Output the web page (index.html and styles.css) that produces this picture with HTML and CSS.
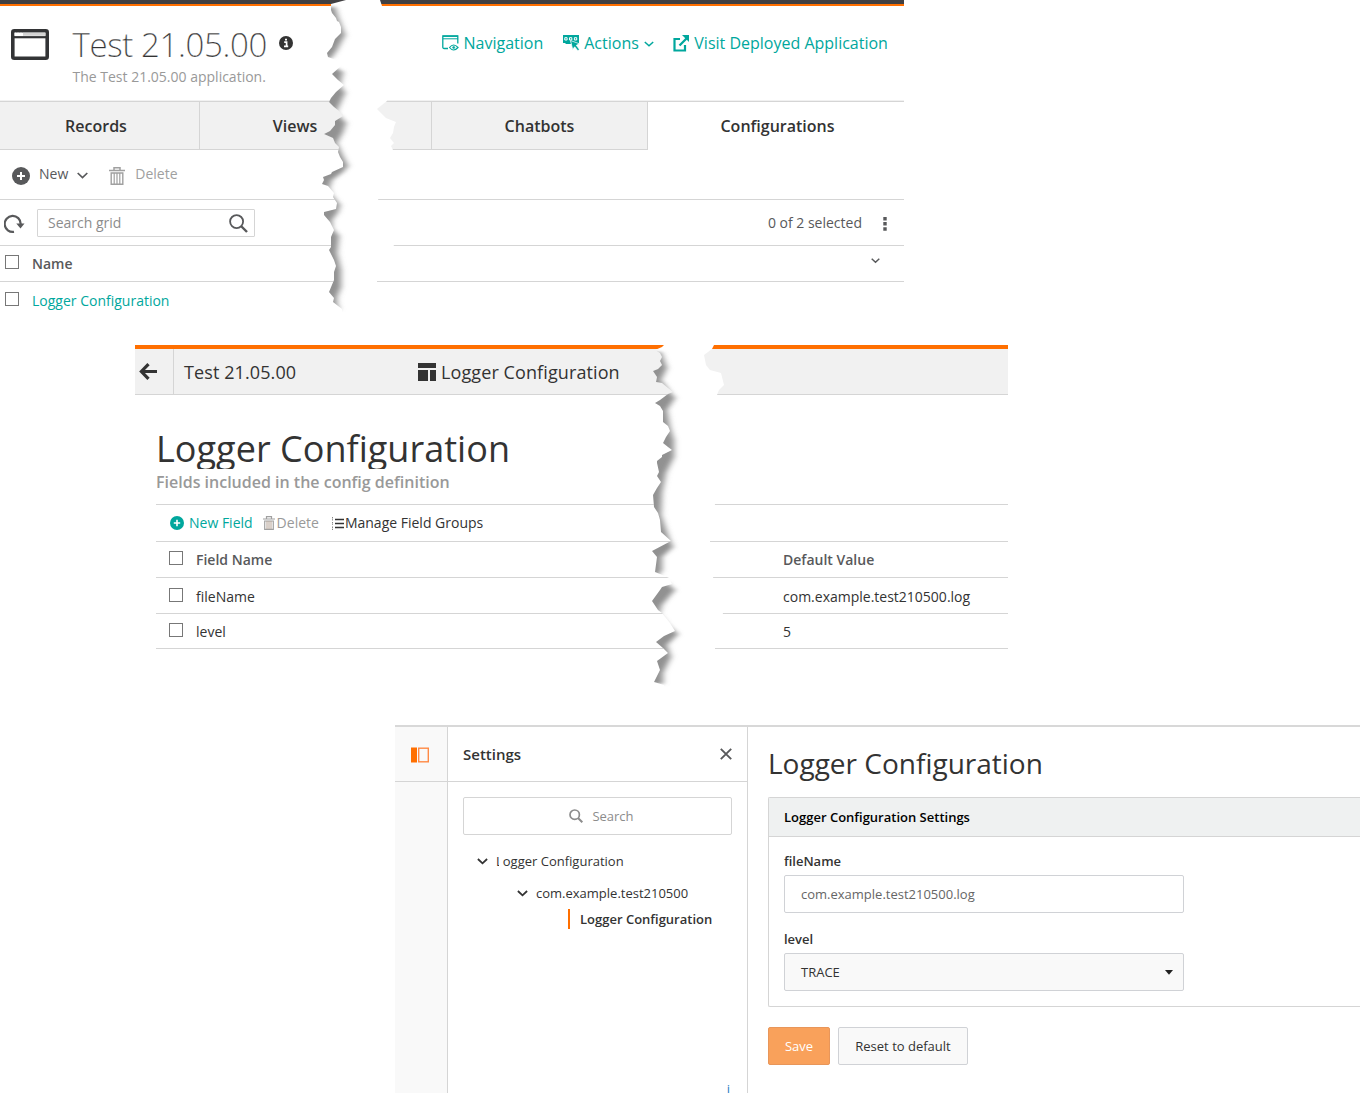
FILE: index.html
```html
<!DOCTYPE html>
<html lang="en">
<head>
<meta charset="utf-8">
<title>Logger Configuration</title>
<link rel="stylesheet" href="styles.css">
</head>
<body>
<section class="app">
  <div class="app-strip"></div>
  <header class="app-head">
    <svg class="app-icon" width="38" height="31" viewBox="0 0 38 31"><rect x="1.800" y="1.800" width="34.400" height="27.400" rx="1.500" fill="none" stroke="#333436" stroke-width="3.600"/><path d="M3 8.200h32" stroke="#333436" stroke-width="2.200"/><path d="M12 5.300h22.500" stroke="#d4d4d4" stroke-width="3"/><path d="M3.500 5.300h1.500M6.300 5.300h1.500M9.200 5.300h1.500" stroke="#fff" stroke-width="3"/></svg>
    <div class="app-title">
      <h1><span>Test 21.05.00</span><svg width="14" height="14" viewBox="0 0 14 14"><circle cx="7" cy="7" r="7" fill="#333"/><path d="M5.200 6.200h2.400v4M5 10.300h4.200M6 3.600h2" stroke="#fff" stroke-width="1.700" fill="none"/></svg></h1>
      <p>The Test 21.05.00 application.</p>
    </div>
    <nav class="app-links">
      <a class="l-nav"><svg width="17" height="16" viewBox="0 0 17 16" fill="none" stroke="#00a79d"><path d="M6 13.500H2.200Q.8 13.500.8 12V1h15v7.500" stroke-width="1.300"/><path d="M1 1.200h15" stroke-width="1.300"/><path d="M1 3.800h15" stroke-width="1"/><path d="M7.500 12.500q4-5 8.500 0q-4.500 5-8.500 0z" stroke-width="1.200"/><circle cx="11.700" cy="12.500" r="1.100" fill="#00a79d" stroke-width=".6"/></svg><span>Navigation</span></a>
      <a class="l-act"><svg width="17" height="16" viewBox="0 0 17 16"><path d="M0 0h16v8h-3L7.500 6l.8 3H3l-1-1H0z" fill="#00a79d"/><path d="M1.800 2.700h2.300v2.300H1.800zM6.500 2.700h2.300v2.300H6.500zM11.400 2.700h2.300v2.300h-2.300z" fill="none" stroke="#fff" stroke-width="1"/><path d="M7.500 5.500l9 3.300-3.200 1.500 3 4-1.400 1.500-3.200-4-2 2.600z" fill="#00a79d" stroke="#fff" stroke-width=".7"/></svg><span>Actions</span><svg class="chev" width="10" height="6" viewBox="0 0 10 6"><path d="M.8 1l4.200 3.800L9.200 1" fill="none" stroke="#00a79d" stroke-width="1.500"/></svg></a>
      <a class="l-vis"><svg width="17" height="17" viewBox="0 0 17 17" fill="none" stroke="#00a79d"><path d="M7 4H1.500v11.500H12V10" stroke-width="2.200"/><path d="M6.500 10.500L14 3" stroke-width="2.300"/><path d="M9 0H16v7z" fill="#00a79d" stroke="none"/></svg><span>Visit Deployed Application</span></a>
    </nav>
  </header>
  <div class="tabs">
    <div class="tab tab-records"><span>Records</span></div>
    <div class="tab tab-views"><span>Views</span></div>
    <div class="tab tab-chat"><span>Chatbots</span></div>
    <div class="tab tab-on"><span>Configurations</span></div>
  </div>
  <div class="tools">
    <svg class="i-plus" width="18" height="18" viewBox="0 0 18 18"><circle cx="9" cy="9" r="9" fill="#58595b"/><path d="M9 5v8M5 9h8" stroke="#fff" stroke-width="2"/></svg>
    <span class="new">New</span>
    <svg class="i-chev" width="11" height="7" viewBox="0 0 11 7"><path d="M.7 1l4.800 4.600L10.300 1" fill="none" stroke="#58595b" stroke-width="1.700"/></svg>
    <svg class="i-bin" width="16" height="18" viewBox="0 0 16 18" fill="none" stroke="#a0a0a0"><path d="M0 3.500h16M5 3V.8h6V3" stroke-width="1.500"/><path d="M2.200 6h11.600v11.200H2.200z" stroke-width="1.400"/><path d="M5.200 6v11M8 6v11M10.800 6v11" stroke-width="1.200"/></svg>
    <span class="del">Delete</span>
  </div>
  <div class="search-row">
    <svg class="i-reload" width="21" height="20" viewBox="0 0 21 20"><path d="M10 17.800A8 8 0 1 1 16.700 10" fill="none" stroke="#58595b" stroke-width="2.200"/><path d="M12.300 9.500h8.200l-4 5z" fill="#58595b"/></svg>
    <div class="grid-search"><span>Search grid</span><svg width="19" height="19" viewBox="0 0 19 19" fill="none" stroke="#58595b"><circle cx="7.600" cy="7.600" r="6.500" stroke-width="1.800"/><path d="M12 12l6 6" stroke-width="2.400"/></svg></div>
    <span class="count">0 of 2 selected</span>
    <svg class="i-dots" width="4" height="14" viewBox="0 0 4 14"><path d="M.3 0h3.400v3.400H.3zM.3 5h3.400v3.400H.3zM.3 10.300h3.400v3.400H.3z" fill="#58595b"/></svg>
  </div>
  <div class="grid-row grid-head"><i class="box"></i><span>Name</span><svg width="9" height="6" viewBox="0 0 9 6"><path d="M.7.800l3.800 3.400L8.300.800" fill="none" stroke="#58595b" stroke-width="1.500"/></svg></div>
  <div class="grid-row grid-item"><i class="box"></i><span>Logger Configuration</span></div>
  <svg class="tear" width="904" height="312" viewBox="0 0 904 312">
    <defs>
      <filter id="soft1" x="-50%" y="-5%" width="200%" height="110%"><feGaussianBlur stdDeviation="3.200 1.800"/></filter>
      <clipPath id="rip1"><path id="gap1" d="M346 0L331 4 331 10 332 13 336 18 337 21 339 22 341 27 341 33 335 39 332 47 327 53 328 57 336 60 341 66 332 74 338 80 344 85 336 92 331 98 329 102 334 107 339 111 343 116 335 121 335 125 330 131 324 134 333 138 335 143 339 147 338 152 340 157 343 162 343 167 332 172 331 174 323 177 324 180 322 184 328 186 334 193 333 197 337 203 336 209 324 212 324 215 330 222 334 230 331 237 331 247 329 250 334 260 336 266 334 272 334 280 329 292 334 298 333 302 342 309V312H377V281L394 245 378 199 393 150 391 146 394 143 390 138 393 133 394 127 396 122 386 118 377 109 387 101 382 6 380 0z"/></clipPath>
    </defs>
    <use href="#gap1" fill="#fff"/>
    <g clip-path="url(#rip1)"><path filter="url(#soft1)" fill="#919191" d="M310 6L335 7 338 17 345 35 337 50 332 57 325 61 332 66 343 72 340 85 345 93 339 106 336 112 346 123 343 132 337 143 342 154 348 166 343 172 332 180 329 188 331 194 340 205 338 212 332 220 332 228 339 236 337 253 341 270 341 287 337 297 337 303 339 310H310z"/></g>
  </svg>
</section>

<section class="editor">
  <header class="crumbs">
    <div class="back"><svg width="18" height="17" viewBox="0 0 18 17" fill="none" stroke="#333" stroke-width="3.200"><path d="M9.500 1.200L2.400 8.500l7.100 7.300M2.500 8.500H18"/></svg></div>
    <span class="crumb-app">Test 21.05.00</span>
    <svg class="crumb-icon" width="18" height="18" viewBox="0 0 18 18"><path d="M0 0h18v5H0zM0 7h10v11H0zM12 7h6v11h-6z" fill="#333"/></svg>
    <span class="crumb-page">Logger Configuration</span>
  </header>
  <div class="fields">
    <h2><span>Logger Configuration</span></h2>
    <p class="hint">Fields included in the config definition</p>
    <div class="field-tools">
      <svg width="14" height="14" viewBox="0 0 14 14"><circle cx="7" cy="7" r="7" fill="#00a79d"/><path d="M7 3.800v6.400M3.800 7h6.400" stroke="#fff" stroke-width="1.600"/></svg>
      <span class="f-new">New Field</span>
      <svg class="f-bin" width="12" height="14" viewBox="0 0 12 14" fill="none" stroke="#a0a0a0"><path d="M0 3h12M3.500 2.800V.7h5v2.100" stroke-width="1.200"/><path d="M1.700 5h8.600v8.300H1.700z" stroke-width="1.200"/><path d="M4 5v8M6 5v8M8 5v8" stroke="#aa9688" stroke-width=".9"/></svg>
      <span class="f-del">Delete</span>
      <svg class="f-list" width="13" height="13" viewBox="0 0 13 13"><path d="M4 2.500H13M4 6.500H13M4 10.500H13" stroke="#333" stroke-width="1.700"/><path d="M1.500 0v3.500M1.500 5v3M1.500 9.500v3.500" stroke="#888" stroke-dasharray="1.500 .7"/></svg>
      <span class="f-man">Manage Field Groups</span>
    </div>
    <div class="frow frow-head"><i class="box"></i><span class="name">Field Name</span><span>Default Value</span></div>
    <div class="frow frow-file"><i class="box"></i><span class="name">fileName</span><span>com.example.test210500.log</span></div>
    <div class="frow frow-last"><i class="box"></i><span class="name">level</span><span>5</span></div>
  </div>
  <svg class="tear" width="873" height="342" viewBox="135 345 873 342">
    <defs>
      <filter id="soft2" x="-50%" y="-5%" width="200%" height="110%"><feGaussianBlur stdDeviation="3.200 1.800"/></filter>
      <clipPath id="rip2"><path id="gap2" d="M664 345L662 347 655 350 660 353 662 357 660 361 662 365 658 369 653 371 657 377 656 382 662 383 668 388 673 392 668 394 660 400 655 403 660 406 663 411 663 422 668 426 670 431 666 437 663 443 668 447 672 450 662 455 662 457 657 461 657 463 659 472 657 476 661 482 657 488 653 495 654 507 658 513 660 520 661 532 671 541 652 551 657 557 655 572 665 576 669 578 672 584 662 587 660 590 652 601 658 610 662 613 670 623 675 631 664 636 656 642 663 648 668 653 657 661 660 670 654 682 664 685V687H714L715 648 723 613 713 577 710 541 715 504 717 395 719 390 724 385 721 373 710 370 706 365 704 355 712 349 714 345z"/></clipPath>
    </defs>
    <use href="#gap2" fill="#fff"/>
    <g clip-path="url(#rip2)"><path filter="url(#soft2)" fill="#919191" d="M640 352L661 352 667 368 661 380 670 392 675 398 667 410 670 427 674 440 674 457 666 473 662 493 661 515 669 538 673 547 662 557 662 570 657 577 667 583 675 590 662 605 659 614 668 625 678 634 667 645 671 657 663 673 663 684 640 684z"/></g>
  </svg>
</section>

<section class="settings">
  <aside class="rail"><div class="rail-top"><svg width="18" height="16" viewBox="0 0 18 16"><path d="M0 .5h6v15H0z" fill="#ff6f00"/><rect x="7.700" y="1.200" width="9.600" height="13.600" fill="none" stroke="#ff8a45" stroke-width="1.400"/></svg></div></aside>
  <aside class="side">
    <div class="side-head"><span>Settings</span><svg width="12" height="12" viewBox="0 0 12 12"><path d="M.8.800l10.400 10.400M11.200.800L.8 11.200" stroke="#58595b" stroke-width="1.900"/></svg></div>
    <div class="side-search"><svg width="14" height="14" viewBox="0 0 14 14" fill="none" stroke="#8c8c8c"><circle cx="5.700" cy="5.700" r="4.700" stroke-width="1.700"/><path d="M9 9l4.300 4.300" stroke-width="2"/></svg><span>Search</span></div>
    <div class="node node-1"><svg width="11" height="7" viewBox="0 0 11 7"><path d="M.9 1l4.600 4.300L10.100 1" fill="none" stroke="#333" stroke-width="1.800"/></svg><span class="cut">Logger Configuration</span></div>
    <div class="node node-2"><svg width="11" height="7" viewBox="0 0 11 7"><path d="M.9 1l4.600 4.300L10.100 1" fill="none" stroke="#333" stroke-width="1.800"/></svg><span>com.example.test210500</span></div>
    <div class="node node-3"><span>Logger Configuration</span></div>
    <div class="side-foot">i</div>
  </aside>
  <main class="main">
    <h2>Logger Configuration</h2>
    <div class="card">
      <h3>Logger Configuration Settings</h3>
      <div class="card-body">
        <label>fileName</label>
        <div class="input"><span>com.example.test210500.log</span></div>
        <label class="second">level</label>
        <div class="input select"><span>TRACE</span><svg width="8" height="5" viewBox="0 0 8 5"><path d="M0 0h8L4 4.800z" fill="#222"/></svg></div>
      </div>
    </div>
    <div class="actions"><button class="save">Save</button><button class="reset">Reset to default</button></div>
  </main>
</section>
</body>
</html>
```
FILE: styles.css
```css
* { box-sizing: border-box; }
body { margin: 0; width: 1360px; height: 1093px; overflow: hidden; background: #fff; color: #333; font-family: "Open Sans", "Noto Sans", sans-serif; font-size: 14px; line-height: 20px; }
h1, h2, h3, p { margin: 0; font-weight: 400; }
svg { display: block; flex: none; }
span { white-space: nowrap; }
.box { width: 14px; height: 14px; border: 1px solid #777; flex: none; background: #fff; }
.tear { position: absolute; left: 0; top: 0; }

.app { position: relative; width: 904px; height: 310px; }
.app-strip { height: 6px; background: #414042; border-bottom: 2px solid #ff6f00; }
.app-head { height: 95px; display: flex; padding-left: 11px; border-bottom: 1px solid #f1f1f1; }
.app-icon { margin-top: 23px; }
.app-title { margin-left: 23.5px; padding-top: 16px; width: 369px; }
.app-title h1 { display: flex; font-size: 33px; font-weight: 300; line-height: 45px; letter-spacing: -0.36px; -webkit-text-stroke: 0.25px #fff; }
.app-title h1 svg { margin: 14px 0 0 12px; }
.app-title p { color: #999; line-height: 20px; }
.app-links { display: flex; padding-top: 25px; font-size: 16px; line-height: 24px; color: #00a79d; }
.app-links a { display: flex; }
.app-links a svg { margin: 4px 5px 0 0; }
.l-act { margin-left: 19.5px; }
.l-vis { margin-left: 19px; }
.app-links .l-act svg:first-child { margin-right: 4.5px; }
.app-links .l-vis svg { margin-right: 4.5px; }
.app-links a .chev { margin: 10px 0 0 5px; }
.tabs { display: flex; height: 49px; border-top: 1px solid #d5d5d5; font-size: 16px; font-weight: 600; }
.tab { display: flex; align-items: center; justify-content: center; background: #f1f1f1; border-right: 1px solid #d5d5d5; border-bottom: 1px solid #d5d5d5; }
.tab-records { width: 200px; padding-right: 7px; }
.tab-views { width: 232px; padding-right: 41px; }
.tab-chat { width: 216px; }
.tab-on { width: 256px; background: #fff; border: 0; padding-left: 3px; }
.tools { display: flex; height: 50px; padding-left: 12px; border-bottom: 1px solid #d5d5d5; color: #58595b; }
.i-plus { margin: 17px 9px 0 0; }
.tools span { padding-top: 14px; }
.i-chev { margin: 22px 21px 0 9px; }
.i-bin { margin: 17px 10px 0 0; }
.tools .del { color: #a0a0a0; }
.search-row { display: flex; height: 46px; padding-left: 4px; border-bottom: 1px solid #d5d5d5; }
.i-reload { margin: 14px 12px 0 0; }
.grid-search { margin-top: 9px; width: 218px; height: 28px; padding: 0 6px 0 10px; border: 1px solid #d5d5d5; display: flex; align-items: center; justify-content: space-between; color: #8c8c8c; border-radius: 1px; }
.count { margin: 13px 21px 0 auto; color: #58595b; }
.i-dots { margin: 17px 17px 0 0; }
.grid-row { display: flex; height: 36px; padding-left: 5px; }
.grid-row span { margin: 8px 0 0 13px; }
.grid-head { border-bottom: 1px solid #d5d5d5; font-weight: 600; color: #58595b; }
.grid-row .box { margin-top: 9px; }
.grid-head svg { margin: 12px 24px 0 auto; }
.grid-item { color: #00a79d; height: 28px; }
.grid-item .box { margin-top: 10px; }
.grid-item span { margin-top: 9px; }

.editor { position: relative; width: 873px; height: 341px; margin: 35px 0 0 135px; }
.crumbs { height: 50px; border-top: 4px solid #ff6f00; border-bottom: 1px solid #d5d5d5; background: #f1f1f1; display: flex; font-size: 18px; line-height: 24px; letter-spacing: 0.1px; }
.back { width: 39px; border-right: 1px solid #d5d5d5; padding: 14px 0 0 4px; }
.crumb-app { margin: 11px 0 0 10px; width: 234px; }
.crumb-icon { margin: 14px 5px 0 0; }
.crumb-page { margin-top: 11px; }
.fields { padding-left: 21px; }
.fields h2 { height: 44px; margin-top: 30px; overflow: hidden; font-size: 36px; line-height: 47px; letter-spacing: 0.03px; }
.hint { font-size: 16px; font-weight: 600; line-height: 26px; color: #999; height: 36px; border-bottom: 1px solid #d5d5d5; }
.field-tools { height: 37px; display: flex; align-items: center; padding-left: 14px; border-bottom: 1px solid #d5d5d5; }
.f-new { margin-left: 5px; color: #00a79d; }
.f-bin { margin-left: 10px; }
.f-del { color: #999; margin-left: 2px; }
.f-list { margin-left: 12px; }
.f-man { margin-left: 1px; }
.frow { height: 36px; border-bottom: 1px solid #d5d5d5; display: flex; padding-left: 13px; }
.frow .box { margin-top: 9px; }
.frow span { margin-top: 9px; }
.frow .name { margin-left: 13px; width: 587px; }
.frow-head { font-weight: 600; color: #58595b; }
.frow-head span { margin-top: 8px; }
.frow-file .box { margin-top: 10px; }
.frow-last { height: 35px; }
.frow-last span { margin-top: 8px; }

.settings { width: 965px; height: 368px; margin: 39px 0 0 395px; border-top: 2px solid #d8d8d8; display: flex; font-size: 13px; }
.rail { width: 53px; background: #f9f9f9; border-right: 1px solid #d5d5d5; }
.rail-top { height: 55px; border-bottom: 1px solid #d5d5d5; padding: 20px 0 0 16px; }
.side { width: 300px; border-right: 1px solid #d5d5d5; position: relative; overflow: hidden; }
.side-head { height: 55px; border-bottom: 1px solid #d5d5d5; display: flex; align-items: center; justify-content: space-between; padding: 0 15.5px 0 15px; font-size: 15px; font-weight: 600; }
.side-search { margin: 15px 15px 0; height: 38px; border: 1px solid #d5d5d5; border-radius: 2px; display: flex; align-items: center; justify-content: center; gap: 9px; padding-left: 8px; color: #8c8c8c; }
.node { display: flex; align-items: center; height: 20px; }
.node-1 { margin: 16px 0 0 29px; gap: 8px; }
.node-2 { margin: 12px 0 0 69px; gap: 8px; }
.node-3 { margin: 6px 0 0 120px; border-left: 2px solid #ff6f00; padding-left: 10px; font-weight: 600; }
.cut { position: relative; }
.cut::after { content: ""; position: absolute; left: 3px; top: 12px; width: 4px; height: 5px; background: #fff; }
.side-foot { position: absolute; right: 17px; top: 352px; color: #2b7fc4; font-size: 13px; }
.main { flex: 1; padding-left: 20px; }
.main h2 { margin-top: 17px; font-size: 28px; line-height: 38px; }
.card { margin-top: 15px; height: 210px; border: 1px solid #d5d5d5; border-right: 0; border-radius: 2px 0 0 2px; }
.card h3 { height: 39px; background: #eff1f1; border-bottom: 1px solid #d5d5d5; padding: 9px 15px; font-size: 13px; font-weight: 600; color: #000; }
.card-body { padding: 14px 15px; }
.card label { display: block; font-weight: 600; }
.card .second { margin-top: 16px; }
.input { margin-top: 4px; width: 400px; height: 38px; border: 1px solid #d0d2d6; border-radius: 2px; display: flex; align-items: center; justify-content: space-between; padding: 0 10px 0 16px; color: #666; }
.select { background: #f9f9f9; color: #333; }
.actions { display: flex; gap: 8px; margin-top: 20px; }
.actions button { height: 38px; font: inherit; border-radius: 2px; padding: 0; }
.save { width: 62px; background: #f9a15b; color: #fff; border: 1px solid #e8965a; }
.reset { width: 130px; background: #f9f9f9; color: #333; border: 1px solid #d0d2d6; }
```
